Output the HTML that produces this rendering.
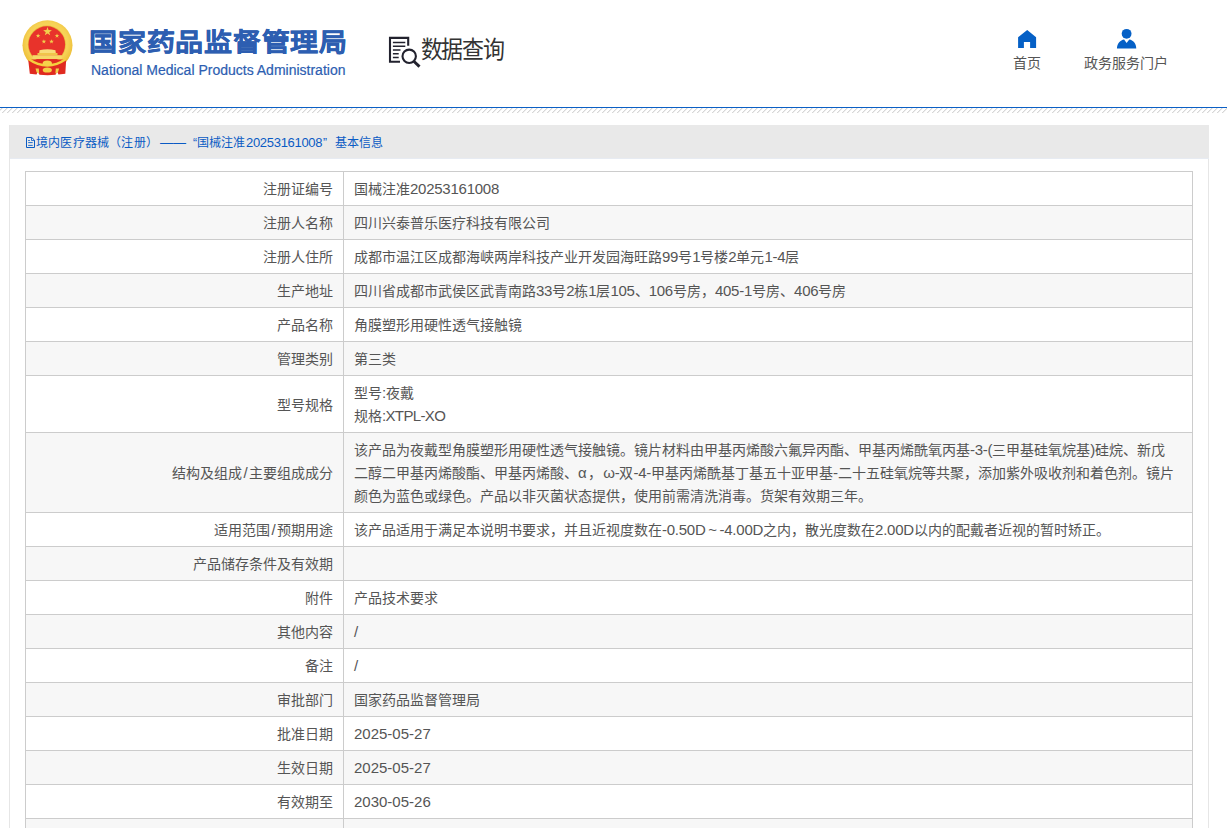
<!DOCTYPE html>
<html lang="zh-CN"><head><meta charset="utf-8">
<style>
*{box-sizing:border-box}
html,body{margin:0;padding:0;background:#fff;width:1227px;height:828px;overflow:hidden}
body{font-family:"Liberation Sans",sans-serif;color:#555;font-size:14px;position:relative}
.abs{position:absolute}
#hdr{position:absolute;left:0;top:0;width:1227px;height:107px}
#bl{position:absolute;left:0;top:107px;width:1227px;height:1px;background:#0b5fc5}
#hatch{position:absolute;left:0;top:108px;width:1227px;height:6px}
#title{position:absolute;left:89px;top:27px;-webkit-text-stroke:0.5px #2d5eb1;letter-spacing:0.75px;transform-origin:0 0;transform:scaleY(0.91);font-size:28px;font-weight:bold;color:#2d5eb1;line-height:34px;white-space:nowrap}
#eng{position:absolute;left:91px;top:62px;-webkit-text-stroke:0.2px #2d5eb1;font-size:14px;color:#2d5eb1;line-height:16px;white-space:nowrap}
#dq{position:absolute;left:420.5px;top:34.5px;font-size:22px;letter-spacing:-1.1px;transform-origin:0 0;transform:scale(1,1.08);color:#333;line-height:28px;white-space:nowrap}
.nav{position:absolute;font-size:14px;color:#555;line-height:16px;white-space:nowrap}
#panel{position:absolute;left:9px;top:125px;width:1200px;height:720px;border-left:1px solid #e6e6e6;border-right:1px solid #e6e6e6}
.cs{position:absolute;top:1px}
#crumb{position:absolute;left:0;top:0;width:1199px;height:34px;background:#e9e9e9;box-shadow:inset 0 -1px #e7ebf2;font-size:12px;color:#0a5bc4;line-height:34px;padding-left:26px;white-space:nowrap}
table{position:absolute;left:15px;top:46px;width:1168px;border-collapse:collapse;table-layout:fixed}
td{border:1px solid #cccccc;font-size:14px;line-height:23px;padding:6px 10px 4px;color:#555;vertical-align:middle}
td.l{text-align:right;width:318px}
.n{font-size:15px;letter-spacing:-0.25px;line-height:0}
tr:nth-child(even) td{background:#f7f7f7}
</style></head><body>
<div id="hdr">
 <svg class="abs" style="left:20px;top:18px" width="56" height="60" viewBox="0 0 56 60">
  <defs><radialGradient id="gd" cx="50%" cy="45%" r="55%"><stop offset="0" stop-color="#fbe37a"/><stop offset="0.75" stop-color="#f6d255"/><stop offset="1" stop-color="#ecbb34"/></radialGradient></defs>
  <circle cx="27.5" cy="27.3" r="25" fill="url(#gd)"/>
  <circle cx="26.8" cy="26.6" r="19" fill="#e9b83a"/>
  <circle cx="26.8" cy="26.6" r="18.3" fill="#e8332b"/>
  <path d="M27.50,9.00 L28.58,12.11 L31.87,12.18 L29.25,14.17 L30.20,17.32 L27.50,15.44 L24.80,17.32 L25.75,14.17 L23.13,12.18 L26.42,12.11Z M18.10,15.40 L18.66,17.02 L20.38,17.06 L19.01,18.10 L19.51,19.74 L18.10,18.76 L16.69,19.74 L17.19,18.10 L15.82,17.06 L17.54,17.02Z M23.90,21.20 L24.46,22.82 L26.18,22.86 L24.81,23.90 L25.31,25.54 L23.90,24.56 L22.49,25.54 L22.99,23.90 L21.62,22.86 L23.34,22.82Z M31.50,21.20 L32.06,22.82 L33.78,22.86 L32.41,23.90 L32.91,25.54 L31.50,24.56 L30.09,25.54 L30.59,23.90 L29.22,22.86 L30.94,22.82Z M37.00,15.40 L37.56,17.02 L39.28,17.06 L37.91,18.10 L38.41,19.74 L37.00,18.76 L35.59,19.74 L36.09,18.10 L34.72,17.06 L36.44,17.02Z" fill="#f2cf4c"/>
  <path d="M19.5 32.2 Q27.4 30.2 35.5 32.2 L35.8 35 L19.2 35 Z" fill="#f8dd7a"/>
  <rect x="17.5" y="35" width="20" height="2.2" fill="#f0c54a"/>
  <rect x="12.5" y="37.2" width="29.3" height="3.8" fill="#f6d868"/>
  <path d="M8.2 41.4 H46.2 L45.3 55.8 L38.5 56.6 L37.2 53.8 L35.5 56.8 L27.5 57.2 L19.5 56.8 L17.8 53.8 L16.5 56.6 L9.8 55.8 Z" fill="#e02a20"/>
  <path d="M8.5 41 Q27.3 54 46 41" fill="none" stroke="#f5cf3e" stroke-width="2.6"/>
  <ellipse cx="27.3" cy="45.2" rx="4.6" ry="2.6" fill="#f6d24a"/>
  <ellipse cx="27.3" cy="52" rx="4.6" ry="2.6" fill="#f4d046"/>
  <path d="M15.5 50.5 L18.8 50.5 L19.2 55.4 L16.6 54.2 Z M39.1 50.5 L35.8 50.5 L35.4 55.4 L38 54.2 Z" fill="#f1d04a"/>
 </svg>
 <div id="title">国家药品监督管理局</div>
 <div id="eng">National Medical Products Administration</div>
 <svg class="abs" style="left:384px;top:32px" width="40" height="40" viewBox="0 0 40 40" fill="none" stroke="#22222e">
  <path d="M16 29.7 H6 V5.9 H24.2 V13.8" stroke-width="2.1"/>
  <path d="M8.9 10.55 H21.3 M8.9 14.3 H21.3 M8.9 18 H16.5 M8.9 21.7 H14.7 M8.9 25.5 H14.7" stroke-width="1.5"/>
  <circle cx="25.2" cy="24.3" r="6.7" stroke-width="2.1"/>
  <path d="M29.8 29.2 L35.5 34.6" stroke-width="2.9"/>
 </svg>
 <div id="dq">数据查询</div>
 <svg class="abs" style="left:1010px;top:22px" width="36" height="32" viewBox="0 0 36 32"><path d="M17.2 7.9 L26.1 15.2 V25.9 H20.1 V19.9 H13.9 V25.9 H8.1 V15.2 Z" fill="#0560c6"/></svg>
 <svg class="abs" style="left:1110px;top:22px" width="36" height="32" viewBox="0 0 36 32"><circle cx="16.6" cy="11.8" r="4.9" fill="#0560c6"/><path d="M6.95 26.6 C7 21 10.5 18 14.1 17.4 L16.6 21 L19.3 17.4 C23 18 26.2 21 26.25 26.6 Z" fill="#0560c6"/></svg>
 <div class="nav" style="left:1013px;top:55px">首页</div>
 <div class="nav" style="left:1084px;top:55px">政务服务门户</div>
</div>
<div id="bl"></div><svg id="hatch" width="1227" height="6"><defs><pattern id="hp" patternUnits="userSpaceOnUse" width="5" height="5" x="2.3" y="0"><path d="M-1 6 L6 -1" stroke="#bcbcbc" stroke-width="0.85"/></pattern></defs><rect width="1227" height="5" fill="url(#hp)"/></svg>
<div id="panel">
 <div id="crumb"><span class="cs" style="left:26px;letter-spacing:0.2px">境内医疗器械（注册）</span><span class="cs" style="left:150px;font-size:13px">——</span><span class="cs" style="left:183px">“国械注准</span><span class="cs" style="left:236px;letter-spacing:-0.3px;font-size:13px">20253161008</span><span class="cs" style="left:313px">”</span><span class="cs" style="left:325px">基本信息</span></div>
 <svg class="abs" style="left:16px;top:11px" width="12" height="14" viewBox="0 0 12 14" fill="none" stroke="#0a5bc4" stroke-width="1"><path d="M0.5 1.5 H5.8 L8.5 4.2 V11.5 H0.5 Z"/><path d="M5.5 1.8 V4.5 H8.2" stroke-width="0.8"/><path d="M2.2 4.5 H3.8 M2.2 6.6 H6.7 M2.2 9.4 H6.7" stroke-width="0.9"/></svg>
 <table>
  <tr><td class="l">注册证编号</td><td>国械注准<span class="n">20253161008</span></td></tr>
  <tr><td class="l">注册人名称</td><td>四川兴泰普乐医疗科技有限公司</td></tr>
  <tr><td class="l">注册人住所</td><td>成都市温江区成都海峡两岸科技产业开发园海旺路<span class="n">99</span>号<span class="n">1</span>号楼<span class="n">2</span>单元<span class="n">1-4</span>层</td></tr>
  <tr><td class="l">生产地址</td><td>四川省成都市武侯区武青南路<span class="n">33</span>号<span class="n">2</span>栋<span class="n">1</span>层<span class="n">105</span>、<span class="n">106</span>号房，<span class="n">405-1</span>号房、<span class="n">406</span>号房</td></tr>
  <tr><td class="l">产品名称</td><td>角膜塑形用硬性透气接触镜</td></tr>
  <tr><td class="l">管理类别</td><td>第三类</td></tr>
  <tr><td class="l">型号规格</td><td>型号<span class="n">:</span>夜戴<br>规格<span class="n" style="letter-spacing:-0.65px">:XTPL-XO</span></td></tr>
  <tr><td class="l">结构及组成<span class="n" style="margin:0 1.5px">/</span>主要组成成分</td><td>该产品为夜戴型角膜塑形用硬性透气接触镜。镜片材料由甲基丙烯酸六氟异丙酯、甲基丙烯酰氧丙基<span class="n">-3-(</span>三甲基硅氧烷基<span class="n">)</span>硅烷、新戊<br>二醇二甲基丙烯酸酯、甲基丙烯酸、<span class="n" style="letter-spacing:1px">α</span>，<span class="n" style="margin-left:1.5px">ω</span><span class="n">-</span>双<span class="n">-4-</span>甲基丙烯酰基丁基五十亚甲基<span class="n">-</span>二十五硅氧烷等共聚，添加紫外吸收剂和着色剂。镜片<br>颜色为蓝色或绿色。产品以非灭菌状态提供，使用前需清洗消毒。货架有效期三年。</td></tr>
  <tr><td class="l">适用范围<span class="n" style="margin:0 1.5px">/</span>预期用途</td><td>该产品适用于满足本说明书要求，并且近视度数在<span class="n">-0.50D</span><span style="display:inline-block;width:14px;text-align:center;font-size:15px;line-height:0">~</span><span class="n">-4.00D</span>之内，散光度数在<span class="n">2.00D</span>以内的配戴者近视的暂时矫正。</td></tr>
  <tr><td class="l">产品储存条件及有效期</td><td></td></tr>
  <tr><td class="l">附件</td><td>产品技术要求</td></tr>
  <tr><td class="l">其他内容</td><td><span class="n">/</span></td></tr>
  <tr><td class="l">备注</td><td><span class="n">/</span></td></tr>
  <tr><td class="l">审批部门</td><td>国家药品监督管理局</td></tr>
  <tr><td class="l">批准日期</td><td><span class="n" style="letter-spacing:0">2025-05-27</span></td></tr>
  <tr><td class="l">生效日期</td><td><span class="n" style="letter-spacing:0">2025-05-27</span></td></tr>
  <tr><td class="l">有效期至</td><td><span class="n" style="letter-spacing:0">2030-05-26</span></td></tr>
  <tr><td class="l">&nbsp;</td><td>&nbsp;</td></tr>
 </table>
</div>
</body></html>
